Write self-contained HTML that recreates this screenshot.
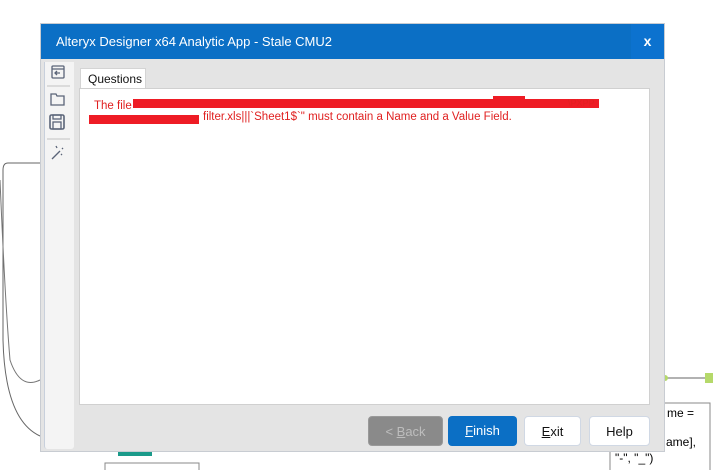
<!DOCTYPE html>
<html><head><meta charset="utf-8"><style>
body{margin:0;width:717px;height:470px;background:#fff;position:relative;overflow:hidden;font-family:"Liberation Sans",sans-serif}
.abs{position:absolute}
.btn{position:absolute;top:416px;height:30px;border-radius:4px;font-size:13px;text-align:center;line-height:30px;box-sizing:border-box}
</style></head><body>
<svg class="abs" style="left:0;top:0" width="717" height="470">
<path d="M40 163 L8 163 Q3 163 3 170 L3 340 Q5 420 40 436" fill="none" stroke="#666" stroke-width="1"/>
<path d="M0 180 Q5 300 10 360 Q20 390 40 380" fill="none" stroke="#777" stroke-width="1"/>
<line x1="665" y1="378" x2="705" y2="378" stroke="#999" stroke-width="1.5"/>
<rect x="705" y="373" width="8" height="10" fill="#b5d96a"/>
<circle cx="665" cy="378" r="3" fill="#b5d96a"/>
<rect x="610" y="403" width="100" height="70" fill="#fff" stroke="#888"/>
<text x="667" y="417" font-size="12" font-family="Liberation Sans">me =</text>
<text x="666" y="446" font-size="12" font-family="Liberation Sans">ame],</text>
<text x="615" y="462" font-size="12" font-family="Liberation Sans">"-", "_")</text>
<rect x="105" y="463" width="94" height="10" fill="#fff" stroke="#888"/>
<rect x="118" y="450" width="34" height="6" fill="#1a9a8a"/>
</svg>
<div class="abs" style="left:40px;top:23px;width:625px;height:429px;background:#e4e4e4;border:1px solid #c8ccd2;box-sizing:border-box"></div>
<div class="abs" style="left:41px;top:24px;width:623px;height:35px;background:#0b6fc5;color:#fff;font-size:13px;line-height:36px;padding-left:15px;box-sizing:border-box">Alteryx Designer x64 Analytic App - Stale CMU2</div>
<div class="abs" style="left:631px;top:24px;width:33px;height:35px;background:#0c72cf;color:#fff;font-weight:bold;font-size:14px;line-height:35px;text-align:center">x</div>
<div class="abs" style="left:44px;top:62px;width:29px;height:387px;background:#f4f4f4;border-left:1px solid #c8d0dc;border-radius:0 0 3px 3px"></div>
<svg class="abs" style="left:44px;top:60px" width="30" height="110" fill="none" stroke="#5a6478" stroke-width="1.3">
<rect x="8" y="6" width="12" height="12" rx="1"/><path d="M8 9 H20 M16 13 H11 M13 11 L11 13 L13 15"/>
<line x1="3" y1="26" x2="26" y2="26" stroke="#ccc"/>
<path d="M7 34 H12 L13 36 H20 V45 H7 Z"/>
<rect x="6" y="55" width="14" height="14" rx="1.5" stroke-width="1.6"/><rect x="9" y="55" width="8" height="4"/><rect x="9" y="62" width="8" height="7"/>
<line x1="3" y1="79" x2="26" y2="79" stroke="#ccc"/>
<path d="M8 99 L16 91"/><path d="M12 86 l1 2 M18 88 l1 1 M17 94 l1 1"/>
</svg>
<div class="abs" style="left:80px;top:68px;width:66px;height:21px;background:#fff;border:1px solid #d4d4d4;border-bottom:none;font-size:12px;line-height:20px;padding-left:7px;box-sizing:border-box;color:#111">Questions</div>
<div class="abs" style="left:79px;top:88px;width:571px;height:317px;background:#fff;border:1px solid #d0d0d0;box-sizing:border-box"></div>
<div class="abs" style="left:94px;top:98px;font-size:11.5px;color:#e02020;line-height:16px;white-space:nowrap">The file "</div>
<div class="abs" style="left:133px;top:99px;width:466px;height:9px;background:#ee1c25"></div>
<div class="abs" style="left:493px;top:96px;width:32px;height:6px;background:#ee1c25"></div>
<div class="abs" style="left:568px;top:98px;font-size:9px;color:#e02020">\PXPP</div>
<div class="abs" style="left:89px;top:115px;width:110px;height:9px;background:#ee1c25"></div>
<div class="abs" style="left:203px;top:111px;font-size:11.5px;color:#e02020;white-space:nowrap">filter.xls|||`Sheet1$`" must contain a Name and a Value Field.</div>
<div class="btn" style="left:368px;width:75px;background:#8a8a8a;color:#bdbdbd;border:1px solid #999">&lt; <u>B</u>ack</div>
<div class="btn" style="left:448px;width:69px;background:#0b6fc5;color:#fff"><u>F</u>inish</div>
<div class="btn" style="left:524px;width:57px;background:#fff;color:#111;border:1px solid #d0d8e4"><u>E</u>xit</div>
<div class="btn" style="left:589px;width:61px;background:#fff;color:#111;border:1px solid #d0d8e4">Help</div>
</body></html>
